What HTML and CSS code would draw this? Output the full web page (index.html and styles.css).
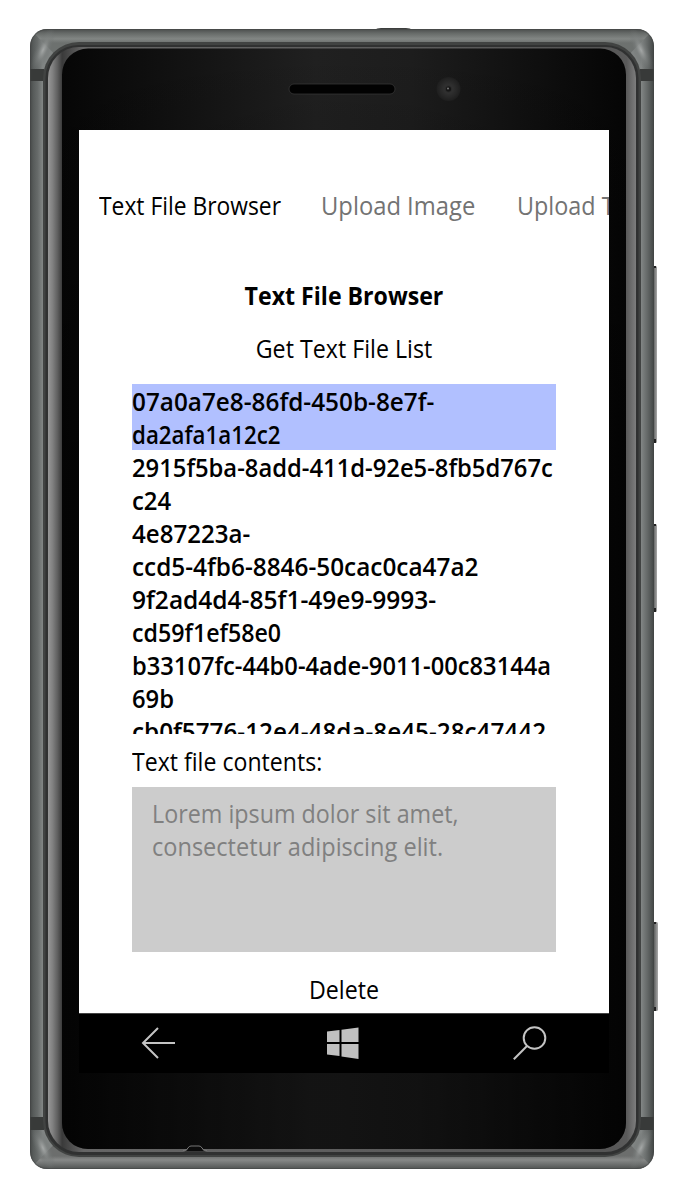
FILE: index.html
```
<!DOCTYPE html>
<html lang="en">
<head>
<meta charset="utf-8">
<title>Text File Browser</title>
<link rel="stylesheet" href="styles.css">
</head>
<body>
<div class="phone">
<svg class="frame" width="679" height="1200" viewBox="0 0 679 1200" aria-hidden="true">
  <defs>
    <linearGradient id="metalX"><stop offset="0" stop-color="#454847"/><stop offset=".005" stop-color="#575b5a"/><stop offset=".012" stop-color="#666a69"/><stop offset=".02" stop-color="#808483"/><stop offset=".98" stop-color="#808483"/><stop offset=".99" stop-color="#626665"/><stop offset="1" stop-color="#414544"/></linearGradient>
    <linearGradient id="metalTop" gradientUnits="userSpaceOnUse" x1="0" y1="29" x2="0" y2="43"><stop offset="0" stop-color="#4a4d4c"/><stop offset=".3" stop-color="#666a68"/><stop offset=".7" stop-color="#828684"/><stop offset="1" stop-color="#6d716f"/></linearGradient>
    <linearGradient id="metalBottom" gradientUnits="userSpaceOnUse" x1="0" y1="1156" x2="0" y2="1169"><stop offset="0" stop-color="#6c6e6d"/><stop offset=".3" stop-color="#878988"/><stop offset="1" stop-color="#505352"/></linearGradient>
    <linearGradient id="rim"><stop offset="0" stop-color="#979797"/><stop offset=".008" stop-color="#808080"/><stop offset=".016" stop-color="#606060"/><stop offset=".024" stop-color="#3a3a3a"/><stop offset=".06" stop-color="#666"/><stop offset=".94" stop-color="#555"/><stop offset=".984" stop-color="#5a5a5a"/><stop offset="1" stop-color="#7d7d7d"/></linearGradient>
    <linearGradient id="glass"><stop offset="0" stop-color="#060606"/><stop offset=".45" stop-color="#202020"/><stop offset=".62" stop-color="#1d1d1d"/><stop offset="1" stop-color="#050505"/></linearGradient>
    <linearGradient id="shade" x2="0" y2="1"><stop offset="0" stop-color="#000" stop-opacity="0"/><stop offset=".4" stop-color="#000" stop-opacity=".4"/><stop offset="1" stop-color="#000" stop-opacity=".4"/></linearGradient>
    <linearGradient id="key"><stop offset="0" stop-color="#383b3a"/><stop offset="1" stop-color="#aaa"/></linearGradient>
    <radialGradient id="lens"><stop offset="0" stop-color="#666"/><stop offset=".18" stop-color="#262626"/><stop offset=".35" stop-color="#303030"/><stop offset=".65" stop-color="#282828"/><stop offset="1" stop-color="#1e1e1e"/></radialGradient>
    <radialGradient id="glint"><stop offset="0" stop-color="#a9acab" stop-opacity=".9"/><stop offset=".5" stop-color="#7c807f" stop-opacity=".6"/><stop offset="1" stop-color="#6a6e6d" stop-opacity="0"/></radialGradient>
    <clipPath id="shell"><rect x="30" y="29" width="624" height="1140" rx="17"/></clipPath>
  </defs>
  <g fill="url(#key)">
    <rect x="652" y="266" width="5" height="177" rx="1.5"/><rect x="652" y="524" width="5" height="88" rx="1.5"/><rect x="652" y="922" width="6" height="89" rx="1.5"/>
  </g>
  <g fill="#222"><rect x="653" y="266" width="3" height="2"/><rect x="653" y="439" width="3" height="4"/><rect x="653" y="524" width="3" height="2"/><rect x="653" y="608" width="3" height="4"/><rect x="653" y="922" width="3" height="2"/><rect x="653" y="1007" width="3" height="4"/></g>
  <path d="M374 30q3-2 7-2h25q4 0 7 2z" fill="#3d3f3e"/>
  <g clip-path="url(#shell)">
    <rect x="30" y="29" width="624" height="1140" fill="url(#metalX)"/>
    <path d="M30 29H654L614 70H70z" fill="url(#metalTop)"/>
    <path d="M30 1169H654L614 1128H70z" fill="url(#metalBottom)"/>
    <ellipse cx="43" cy="50" rx="8" ry="24" fill="url(#glint)" transform="rotate(24 43 50)"/>
    <ellipse cx="641" cy="50" rx="8" ry="24" fill="url(#glint)" transform="rotate(-24 641 50)"/>
    <ellipse cx="43" cy="1148" rx="8" ry="24" fill="url(#glint)" transform="rotate(-24 43 1148)"/>
    <ellipse cx="641" cy="1148" rx="8" ry="24" fill="url(#glint)" transform="rotate(24 641 1148)"/>
    <path d="M30 69h14v12H30zM640 69h14v12h-14zM30 1117h14v13H30zM640 1117h14v13h-14z" fill="#383a39"/>
  </g>
  <rect x="30.500" y="29.500" width="623" height="1139" rx="17" fill="none" stroke="#414443" stroke-opacity=".5"/>
  <rect x="43" y="42" width="598" height="1115" rx="36" fill="#414342"/>
  <rect x="45.500" y="45" width="593" height="1110" rx="33" fill="#303131"/>
  <rect x="48" y="47" width="588" height="1105" rx="31" fill="url(#rim)"/>
  <rect x="62" y="48.500" width="564" height="1100.500" rx="26" fill="url(#glass)"/>
  <rect x="62" y="48.500" width="564" height="1100.500" rx="26" fill="url(#shade)"/>
  <rect x="289" y="84" width="106" height="10" rx="5" fill="#020202" stroke="#3b3b3b" stroke-width=".7"/>
  <circle cx="448.500" cy="89" r="12" fill="url(#lens)"/>
  <circle cx="448.500" cy="89" r="2.500" fill="#161616"/><circle cx="448" cy="88.500" r="1" fill="#777"/>
  <path d="M183 1151.500q4 0 5-3 1-2 3-2h8q2 0 3 2 1 3 5 3z" fill="#0c0c0c"/>
  <path d="M183 1150.500q4 0 5-2.500 1-2 3-2h8q2 0 3 2 1 2.500 5 2.500" fill="none" stroke="#777"/>
</svg>
<main class="screen">
  <nav class="tabs"><span class="tab active"><span class="fit t1">Text File Browser</span></span><span class="tab"><span class="fit t2">Upload Image</span></span><span class="tab"><span class="fit t3">Upload Text</span></span></nav>
  <section class="content">
    <h1 class="title">Text File Browser</h1>
    <div class="button get">Get Text File List</div>
    <ul class="files">
      <li class="selected"><span class="fit l1">07a0a7e8-86fd-450b-8e7f-</span><span class="fit l2">da2afa1a12c2</span></li>
      <li><span class="fit l3">2915f5ba-8add-411d-92e5-8fb5d767c</span><span class="fit l4">c24</span></li>
      <li><span class="fit l5">4e87223a-</span><span class="fit l6">ccd5-4fb6-8846-50cac0ca47a2</span></li>
      <li><span class="fit l7">9f2ad4d4-85f1-49e9-9993-</span><span class="fit l8">cd59f1ef58e0</span></li>
      <li><span class="fit l9">b33107fc-44b0-4ade-9011-00c83144a</span><span class="fit l10">69b</span></li>
      <li><span class="fit l11">cb0f5776-12e4-48da-8e45-28c47442</span></li>
    </ul>
    <div class="label"><span class="fit lb">Text file contents:</span></div>
    <div class="box"><span class="fit b1">Lorem ipsum dolor sit amet,</span><span class="fit b2">consectetur adipiscing elit.</span></div>
    <div class="button delete">Delete</div>
  </section>
  <footer class="keys">
    <svg width="34" height="34" viewBox="0 0 34 34" fill="none" stroke="#c4c4c4" stroke-width="2"><path d="M34 17H2M17 2L2 17l15 15"/></svg>
    <svg class="start" width="32" height="32" viewBox="0 0 32 32" fill="#c0c0c0"><path d="M0 4.500L12.500 3v12H0zM14.500 2.700L31.500 .5V15H14.500zM0 17h12.500v12L0 27.500zM14.500 17h17v15l-17-2.500z"/></svg>
    <svg width="34" height="34" viewBox="0 0 34 34" fill="none" stroke="#c4c4c4" stroke-width="2"><circle cx="21.500" cy="12" r="10.800"/><path d="M14 20L.8 33.300"/></svg>
  </footer>
</main>
</div>
</body>
</html>
```
FILE: styles.css
```
* { box-sizing: border-box; }
body { margin: 0; background: #fff; font-family: "Open Sans", "Noto Sans", sans-serif; font-size: 25px; line-height: 33px; color: #000; }
.phone { display: grid; width: 679px; height: 1200px; overflow: hidden; }
.frame, .screen { grid-area: 1 / 1; }
.frame { display: block; }
.screen { z-index: 1; width: 530px; height: 943px; margin: 130px 0 0 79px; background: #fff; display: flex; flex-direction: column; overflow: hidden; }
.tabs { height: 120px; padding: 59px 0 0 20px; display: flex; overflow: hidden; white-space: nowrap; }
.tab { flex: none; color: #737373; width: 196px; }
.tab.active { color: #000; width: 222px; }
.content { flex: 1; padding: 0 53px; display: flex; flex-direction: column; }
.title { margin: 29px 0 20px; font-size: 25px; line-height: 33px; font-weight: 700; text-align: center; white-space: nowrap; transform: scaleX(.925); }
.button { text-align: center; height: 33px; transform: scaleX(.928); }
.files { list-style: none; margin: 19px 0 11px; padding: 0; height: 350px; overflow: hidden; font-weight: 600; line-height: 33px; }
.files .fit { padding-top: 1px; height: 33px; }

/* Condensed line widths */
.fit { display: block; width: max-content; white-space: nowrap; transform-origin: 0 0; }
.t1 { transform: scaleX(.913); }
.t2 { transform: scaleX(.951); }
.t3 { transform: scaleX(.935); }
.l1 { transform: scaleX(.973); }
.l2 { transform: scaleX(.892); }
.l3 { transform: scaleX(.951); }
.l4 { transform: scaleX(.955); }
.l5 { transform: scaleX(.963); }
.l6 { transform: scaleX(.974); }
.l7 { transform: scaleX(.98); }
.l8 { transform: scaleX(.928); }
.l9 { transform: scaleX(.948); }
.l10 { transform: scaleX(.95); }
.l11 { transform: scaleX(.971); }
.lb { transform: scaleX(.924); }
.b1 { transform: scaleX(.932); }
.b2 { transform: scaleX(.942); }

.selected { background: #b1c0ff; }
.label { height: 42px; }
.box { height: 165px; padding: 10px 20px; background: #ccc; color: #808080; }
.delete { margin-top: 21px; }
.keys { height: 60px; flex: none; border-top: 1px solid #444; background: #000; display: flex; justify-content: space-between; align-items: center; padding: 0 62px 2px; }
.start { margin-right: 3px; }
```
